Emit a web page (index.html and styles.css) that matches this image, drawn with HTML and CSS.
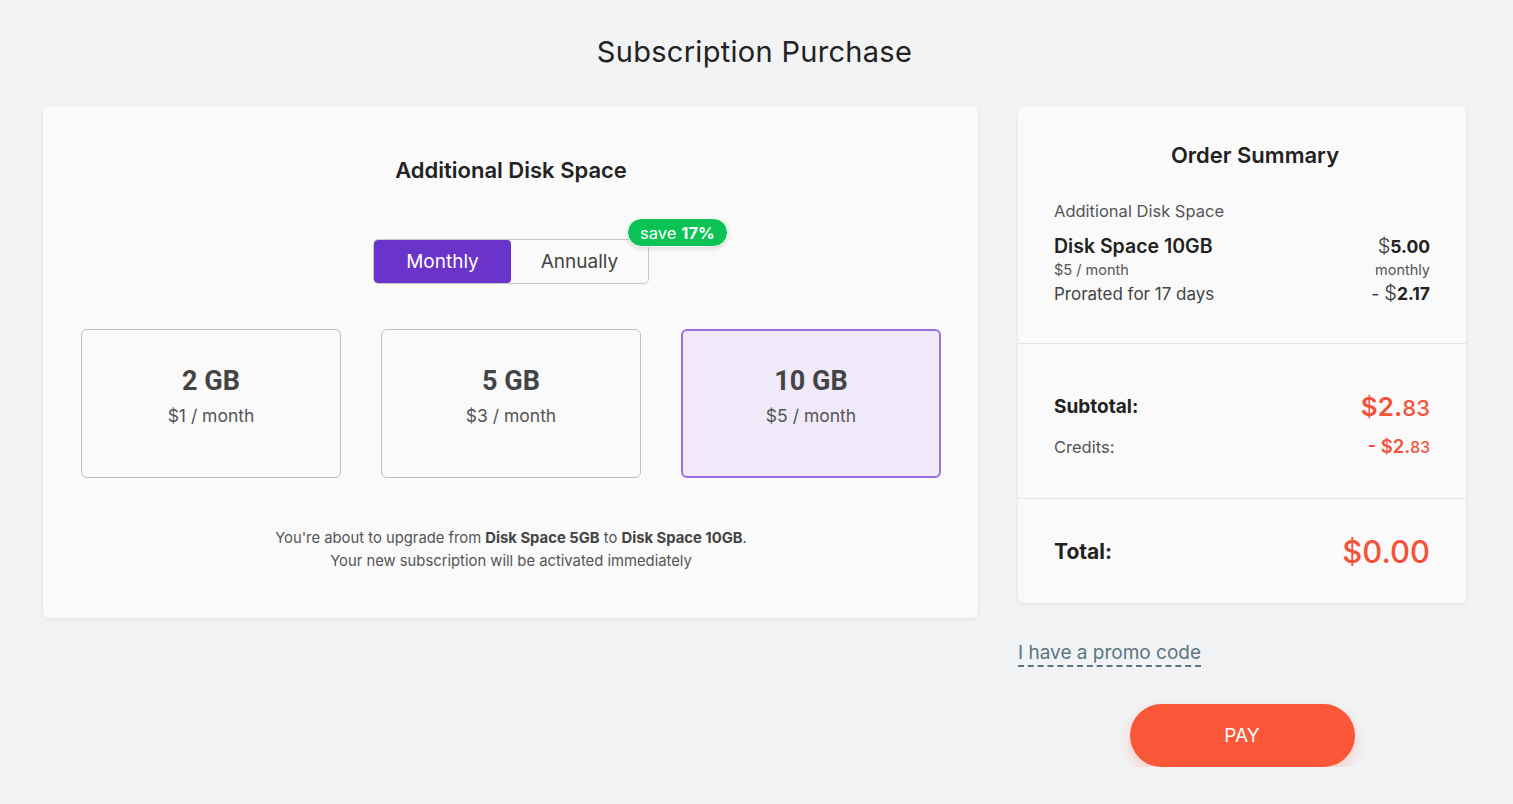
FILE: index.html
```html
<!DOCTYPE html>
<html>
<head>
<meta charset="utf-8">
<link rel="stylesheet" href="styles.css">
</head>
<body>
<div class="page">
  <h1 class="title">Subscription Purchase</h1>
  <div class="layout">
    <section class="card main">
      <h2 class="main-head">Additional Disk Space</h2>
      <div class="toggle-wrap">
        <div class="toggle">
          <div class="tab active">Monthly</div>
          <div class="tab">Annually</div>
        </div>
        <div class="badge">save <b>17%</b></div>
      </div>
      <div class="options">
        <div class="option"><div class="gb">2 GB</div><div class="price">$1 / month</div></div>
        <div class="option"><div class="gb">5 GB</div><div class="price">$3 / month</div></div>
        <div class="option selected"><div class="gb">10 GB</div><div class="price">$5 / month</div></div>
      </div>
      <p class="note">You're about to upgrade from <b>Disk Space 5GB</b> to <b>Disk Space 10GB</b>.<br>Your new subscription will be activated immediately</p>
    </section>
    <aside class="side">
      <section class="card summary">
        <div class="sum-top">
          <h2 class="sum-head">Order Summary</h2>
          <div class="cat">Additional Disk Space</div>
          <div class="row item">
            <span class="item-name">Disk Space 10GB</span>
            <span class="amt"><span class="cur">$</span><b>5.00</b></span>
          </div>
          <div class="row small">
            <span>$5 / month</span>
            <span>monthly</span>
          </div>
          <div class="row prorate">
            <span>Prorated for 17 days</span>
            <span class="amt">- <span class="cur">$</span><b>2.17</b></span>
          </div>
        </div>
        <div class="sum-mid">
          <div class="row subtotal">
            <span class="lbl">Subtotal:</span>
            <span class="red big">$2.<small>83</small></span>
          </div>
          <div class="row credits">
            <span>Credits:</span>
            <span class="red">- $2.<small>83</small></span>
          </div>
        </div>
        <div class="sum-bot">
          <div class="row total">
            <span class="lbl">Total:</span>
            <span class="red huge">$0.00</span>
          </div>
        </div>
      </section>
      <a class="promo">I have a promo code</a>
      <div class="pay-wrap"><button class="pay">PAY</button></div>
    </aside>
  </div>
</div>
</body>
</html>
```
FILE: styles.css
```css
* { box-sizing: border-box; }
html, body { margin: 0; padding: 0; }
body {
  background: #f2f3f5;
  font-family: "Inter", "Noto Sans", sans-serif;
  color: #222;
}
.page { padding: 30px 47px 0 43px; }
.title {
  margin: 0;
  text-align: center;
  font-weight: 400;
  font-size: 29px;
  line-height: 44px;
  color: #222;
  letter-spacing: 0.3px;
}
.layout {
  display: flex;
  gap: 40px;
  align-items: flex-start;
  margin-top: 32px;
}
.card {
  background: #fafafa;
  border-radius: 6px;
  box-shadow: 0 1px 4px rgba(0,0,0,0.08);
}
.main {
  width: 935px;
  height: 512px;
  padding: 49px 37px 0 38px;
  display: flex;
  flex-direction: column;
  align-items: center;
}
.main-head {
  margin: 0;
  font-size: 22px;
  font-weight: 600;
  line-height: 30px;
  color: #222;
}
.toggle-wrap {
  position: relative;
  margin-top: 54px;
}
.toggle {
  display: flex;
  border: 1px solid #c9c9c9;
  border-radius: 5px;
  overflow: hidden;
  height: 45px;
}
.tab {
  width: 137px;
  display: flex;
  align-items: center;
  justify-content: center;
  font-size: 19px;
  color: #444;
}
.tab.active {
  background: #6a33c9;
  color: #fff;
  border-radius: 4px;
}
.badge {
  position: absolute;
  left: 254px;
  top: -21px;
  height: 29px;
  padding: 0 12px;
  border-radius: 15px;
  background: #0bc355;
  color: #fff;
  font-size: 16.5px;
  display: flex;
  align-items: center;
  gap: 5px;
  border: 1px solid #fff;
  box-shadow: 0 2px 4px rgba(0,0,0,0.12);
  white-space: nowrap;
}
.badge b { font-weight: 700; }
.options {
  display: flex;
  gap: 40px;
  margin-top: 45px;
  width: 100%;
}
.option {
  width: 260px;
  height: 149px;
  border: 1px solid #bfbfbf;
  border-radius: 6px;
  display: flex;
  flex-direction: column;
  align-items: center;
  padding-top: 35px;
}
.option.selected {
  background: #efe9f9;
  border: 2px solid #9b6fe1;
  padding-top: 34px;
}
.gb {
  font-family: "Roboto", "Inter", sans-serif;
  font-weight: 700;
  font-size: 27px;
  line-height: 32px;
  color: #444;
}
.price {
  margin-top: 8px;
  font-size: 17.5px;
  color: #555;
  line-height: 22px;
}
.note {
  margin: 49px 0 0;
  text-align: center;
  font-size: 14.8px;
  line-height: 23px;
  color: #555;
}
.note b { color: #444; font-weight: 700; }
.side {
  width: 448px;
  display: flex;
  flex-direction: column;
}
.summary { height: 497px; display: flex; flex-direction: column; }
.row { display: flex; justify-content: space-between; align-items: baseline; }
.sum-top {
  padding: 34px 36px 0 36px;
  height: 238px;
  border-bottom: 1px solid #e4e4e4;
}
.sum-head {
  margin: 0;
  text-align: center;
  font-size: 22px;
  font-weight: 600;
  line-height: 30px;
  color: #222;
  padding-left: 26px;
}
.cat { margin-top: 30px; font-size: 16.5px; color: #555; line-height: 22px; }
.item { margin-top: 11px; line-height: 26px; }
.item-name { font-size: 19.5px; font-weight: 600; color: #222; }
.amt { font-size: 17.5px; color: #333; }
.amt .cur { font-weight: 300; font-size: 20px; }
.amt b { font-weight: 700; color: #222; }
.small { font-size: 14.5px; color: #555; line-height: 19px; }
.prorate { font-size: 17px; color: #444; line-height: 26px; margin-top: 1px; }
.sum-mid {
  height: 155px;
  border-bottom: 1px solid #e4e4e4;
  padding: 47px 36px 0 36px;
}
.subtotal { align-items: center; }
.subtotal .lbl { font-size: 19px; font-weight: 700; color: #222; }
.red { color: #f4533a; font-weight: 600; }
.big { font-size: 26px; }
.red small { font-size: 0.85em; font-weight: 500; }
.credits { margin-top: 13px; font-size: 16.5px; color: #555; }
.credits .red { font-size: 18.5px; }
.sum-bot { padding: 34px 36px 0 36px; }
.total { align-items: center; }
.total .lbl { font-size: 21px; font-weight: 700; color: #222; }
.huge { font-size: 31px; font-weight: 500; }
.promo {
  align-self: flex-start;
  margin-top: 38px;
  font-size: 19px;
  line-height: 24px;
  color: #5b7581;
  border-bottom: 2px dashed #5b7581;
  cursor: pointer;
}
.pay-wrap { display: flex; justify-content: center; margin-top: 37px; }
.pay {
  width: 225px;
  height: 63px;
  border: none;
  border-radius: 32px;
  background: #fa5638;
  color: #fff;
  font-family: "Inter", sans-serif;
  font-size: 19px;
  box-shadow: 0 6px 14px rgba(250,86,56,0.25);
}
```
